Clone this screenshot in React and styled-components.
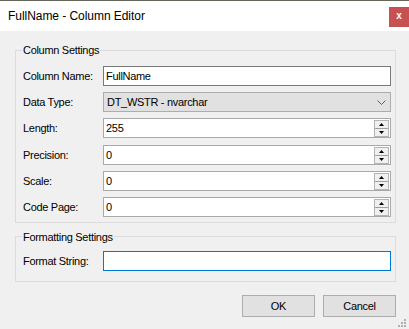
import React from 'react';
import styled, { createGlobalStyle } from 'styled-components';

const GlobalStyle = createGlobalStyle`
  * { box-sizing: border-box; }
  html, body { margin: 0; padding: 0; background: #f0f0f0; }
  body { font-family: "Liberation Sans", Arial, sans-serif; color: #000; }
`;

const Window = styled.div`
  position: relative;
  width: 409px;
  height: 329px;
  display: flex;
  flex-direction: column;
  background: #f0f0f0;
  overflow: hidden;
`;

const TitleBar = styled.div`
  height: 31px;
  border-top: 1px solid #66665a;
  background: #fff;
  display: flex;
  align-items: center;
  justify-content: space-between;
  padding-left: 8px;
`;

const Title = styled.span`
  font-size: 12px;
  letter-spacing: -0.05px;
`;

const CloseButton = styled.div`
  align-self: flex-start;
  margin-top: 6px;
  width: 20px;
  height: 20px;
  background: #c75050;
  color: #fff;
  font-size: 10px;
  font-weight: bold;
  display: flex;
  align-items: center;
  justify-content: center;
  line-height: 1;
  padding-bottom: 2px;
`;

const Body = styled.div`
  flex: 1;
  display: flex;
  flex-direction: column;
  padding: 12px 13px 0 15px;
  font-size: 11px;
  letter-spacing: -0.3px;
`;

const Group = styled.fieldset`
  margin: 0 0 ${p => p.$mb}px;
  min-width: 0;
  border: 1px solid #dcdcdc;
  padding: ${p => p.$pt}px 4px ${p => p.$pb}px 6px;
  display: flex;
  flex-direction: column;
  gap: 6.2px;
`;

const Legend = styled.legend`
  padding: 0 1px;
  line-height: 14px;
  font-size: 11px;
`;

const Row = styled.div`
  display: grid;
  grid-template-columns: 80px 288px;
  align-items: center;
  padding-left: 1px;
  height: 20px;
`;

const Label = styled.span`
  white-space: nowrap;
`;

const TextBox = styled.div`
  height: 20px;
  border: 1px solid ${p => (p.$focused ? '#0078d7' : p.$soft ? '#a9a9a9' : '#7a7a7a')};
  background: #fff;
  display: flex;
  align-items: center;
  padding-left: 2px;
`;

const Value = styled.span`
  flex: 1;
  white-space: nowrap;
`;

const Spin = styled.div`
  width: 15px;
  height: 17px;
  margin: 1px 1px 0 0;
  align-self: flex-start;
  display: flex;
  flex-direction: column;
  border: 1px solid #b4b4b4;
  background: #f0f0f0;
`;

const SpinHalf = styled.div`
  flex: 1;
  display: flex;
  align-items: center;
  justify-content: center;
  border-top: ${p => (p.$down ? '1px solid #a0a0a0' : 'none')};
`;

const Combo = styled.div`
  height: 20px;
  border: 1px solid #adadad;
  background: #e1e1e1;
  display: flex;
  align-items: center;
  padding: 0 4px 0 3px;
`;

const ButtonBar = styled.div`
  display: flex;
  justify-content: flex-end;
  gap: 8px;
  margin-top: 13px;
`;

const Button = styled.div`
  width: 73px;
  height: 22px;
  border: 1px solid #adadad;
  background: #e1e1e1;
  display: flex;
  align-items: center;
  justify-content: center;
  font-size: 11px;
`;

const Grip = styled.svg`
  position: absolute;
  right: 2px;
  bottom: 1px;
`;

const Arrow = ({ down }) => (
  <svg width="5" height="3" viewBox="0 0 5 3">
    <path d={down ? 'M0 0h5L2.5 3z' : 'M2.5 0L5 3H0z'} fill="#000" />
  </svg>
);

const NumberField = ({ value }) => (
  <TextBox $soft>
    <Value>{value}</Value>
    <Spin>
      <SpinHalf><Arrow /></SpinHalf>
      <SpinHalf $down><Arrow down /></SpinHalf>
    </Spin>
  </TextBox>
);

export default function App() {
  return (
    <>
      <GlobalStyle />
      <Window>
        <TitleBar>
          <Title>FullName - Column Editor</Title>
          <CloseButton>x</CloseButton>
        </TitleBar>
        <Body>
          <Group $pt={9} $pb={5} $mb={7}>
            <Legend>Column Settings</Legend>
            <Row>
              <Label>Column Name:</Label>
              <TextBox><Value>FullName</Value></TextBox>
            </Row>
            <Row>
              <Label>Data Type:</Label>
              <Combo>
                <Value>DT_WSTR - nvarchar</Value>
                <svg width="9" height="5" viewBox="0 0 9 5">
                  <path d="M0.5 0.5L4.5 4.5L8.5 0.5" fill="none" stroke="#606060" strokeWidth="1" />
                </svg>
              </Combo>
            </Row>
            <Row>
              <Label>Length:</Label>
              <NumberField value="255" />
            </Row>
            <Row>
              <Label>Precision:</Label>
              <NumberField value="0" />
            </Row>
            <Row>
              <Label>Scale:</Label>
              <NumberField value="0" />
            </Row>
            <Row>
              <Label>Code Page:</Label>
              <NumberField value="0" />
            </Row>
          </Group>
          <Group $pt={7} $pb={10} $mb={0}>
            <Legend>Formatting Settings</Legend>
            <Row>
              <Label>Format String:</Label>
              <TextBox $focused />
            </Row>
          </Group>
          <ButtonBar>
            <Button>OK</Button>
            <Button>Cancel</Button>
          </ButtonBar>
        </Body>
        <Grip width="9" height="9" viewBox="0 0 9 9">
          <g fill="#b0b0b0">
            <rect x="6" y="0" width="2" height="2" />
            <rect x="3" y="3" width="2" height="2" />
            <rect x="6" y="3" width="2" height="2" />
            <rect x="0" y="6" width="2" height="2" />
            <rect x="3" y="6" width="2" height="2" />
            <rect x="6" y="6" width="2" height="2" />
          </g>
        </Grip>
      </Window>
    </>
  );
}
